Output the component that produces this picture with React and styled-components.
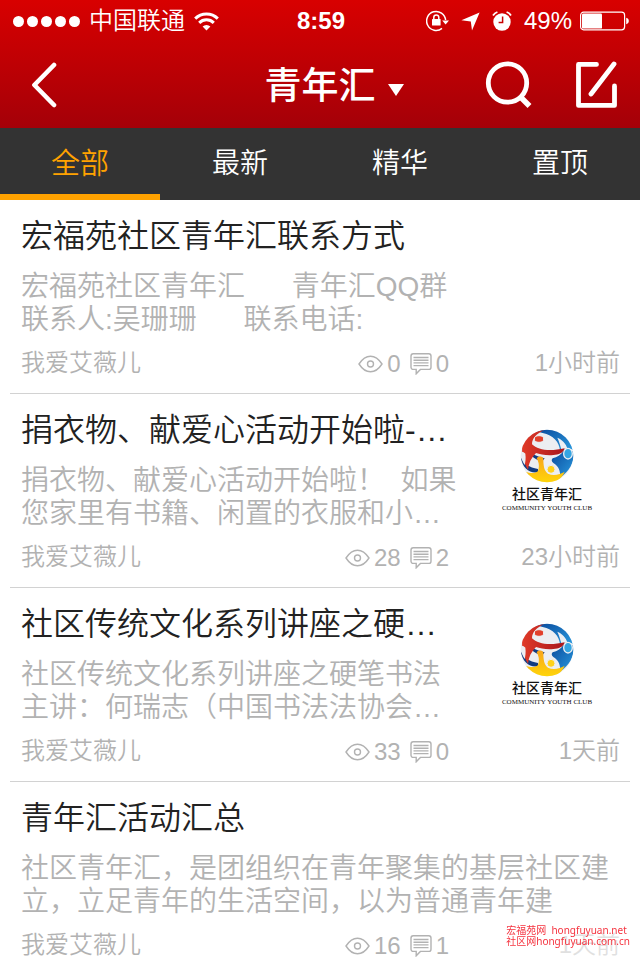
import { useState } from "react";
import styled, { createGlobalStyle } from "styled-components";

const GlobalStyle = createGlobalStyle`
  * {
    box-sizing: border-box;
  }

  body {
    margin: 0;
    background-color: #fff;
    font-family: "Liberation Sans", "Noto Sans CJK SC", sans-serif;
    font-weight: 350;
  }

  button {
    margin: 0;
    padding: 0;
    border: none;
    background: none;
    color: inherit;
    font: inherit;
    cursor: pointer;
  }

  svg {
    display: block;
    flex-shrink: 0;
  }
`;

const Screen = styled.div`
  height: 100vh;
  display: flex;
  flex-direction: column;
  overflow: hidden;
`;

const Header = styled.header`
  flex-shrink: 0;
  color: #fff;
  background: linear-gradient(#d80000, #a40008);
`;

const StatusBar = styled.div`
  display: grid;
  grid-template-columns: 1fr auto 1fr;
  align-items: center;
  height: 40px;
  padding: 1px 11px 0 13px;
  font-size: 24px;
  line-height: 40px;
`;

const StatusGroup = styled.div`
  display: flex;
  align-items: center;
  justify-content: ${(props) => (props.$end ? "flex-end" : "flex-start")};
  gap: ${(props) => (props.$end ? 12 : 9)}px;
`;

const Signal = styled.div`
  display: flex;
  gap: 3px;

  span {
    width: 11px;
    height: 11px;
    border-radius: 50%;
    background-color: #fff;
  }
`;

const Clock = styled.time`
  font-weight: 700;
`;

const Power = styled.div`
  display: flex;
  align-items: center;
  gap: 8px;
`;

const NavBar = styled.div`
  display: grid;
  grid-template-columns: 1fr auto 1fr;
  align-items: center;
  height: 88px;
  padding: 2px 22px 0 30px;
`;

const BackButton = styled.button`
  justify-self: start;
`;

const BoardButton = styled.button`
  display: flex;
  align-items: center;
  gap: 12px;
  padding: 4px 0 0 20px;

  h1 {
    margin: 0;
    font-size: 37px;
    font-weight: 500;
    line-height: 48px;
  }

  svg {
    margin-top: 6px;
  }
`;

const NavActions = styled.div`
  display: flex;
  align-items: center;
  justify-content: flex-end;
  gap: 41px;
`;

const Tabs = styled.nav`
  display: grid;
  grid-template-columns: repeat(4, 1fr);
  flex-shrink: 0;
  height: 72px;
  background-color: #333;
`;

const Tab = styled.button`
  border-bottom: 6px solid ${(props) => (props.$active ? "#ffa200" : "#333")};
  color: ${(props) => (props.$active ? "#ffa200" : "#fff")};
  font-size: ${(props) => (props.$active ? 29 : 28)}px;
`;

const Feed = styled.main`
  flex: 1;
  min-height: 0;
  padding: 0 10px;
  overflow-y: auto;
  scrollbar-width: none;
`;

const Post = styled.article`
  padding: 12px 10px 14px 11px;
  border-bottom: 1px solid #d2d2d2;
`;

const PostBody = styled.div`
  display: flex;
  justify-content: space-between;
`;

const PostText = styled.div`
  flex: 1;
  min-width: 0;
`;

const PostTitle = styled.h2`
  margin: 0 0 10px;
  color: #222;
  font-size: 32px;
  font-weight: 350;
  line-height: 48px;
  white-space: nowrap;
`;

const Summary = styled.p`
  margin: 0;
  color: #b2b2b2;
  font-size: 28px;
  line-height: 33px;
  white-space: pre;
`;

const Thumb = styled.figure`
  display: flex;
  flex-direction: column;
  align-items: center;
  width: 146px;
  margin: 0;
  padding-top: 23px;
  color: #111;
`;

const ThumbName = styled.figcaption`
  margin-top: 2px;
  font-size: 14px;
  font-weight: 500;
  line-height: 19px;
  text-align: center;
  white-space: nowrap;

  small {
    display: block;
    font-family: "Liberation Serif", serif;
    font-size: 7px;
    font-weight: 400;
    line-height: 8px;
  }
`;

const Meta = styled.footer`
  display: flex;
  align-items: center;
  height: 32px;
  margin-top: 11px;
  color: #b2b2b2;
  font-size: 24px;
  line-height: 32px;
`;

const Author = styled.span`
  flex: 1;
`;

const Stat = styled.span`
  display: flex;
  align-items: center;
  gap: 4px;
  margin-left: 9px;
  padding-top: 2px;
`;

const Age = styled.time`
  width: 171px;
  text-align: right;
`;

const Watermark = styled.aside`
  position: fixed;
  right: 8px;
  bottom: 0;
  padding: 0 2px 13px;
  background-color: rgba(255, 255, 255, 0.6);
  color: #f5333f;
  font-family: "Noto Sans", "Noto Sans CJK SC", sans-serif;
  font-size: 10px;
  font-weight: 400;
  line-height: 11px;
  white-space: pre;
`;

const posts = [
  {
    id: 1,
    title: "宏福苑社区青年汇联系方式",
    summary: "宏福苑社区青年汇      青年汇QQ群\n联系人:吴珊珊      联系电话:",
    views: 0,
    replies: 0,
    age: "1小时前",
  },
  {
    id: 2,
    title: "捐衣物、献爱心活动开始啦-…",
    summary: "捐衣物、献爱心活动开始啦！  如果\n您家里有书籍、闲置的衣服和小…",
    views: 28,
    replies: 2,
    age: "23小时前",
    thumb: true,
  },
  {
    id: 3,
    title: "社区传统文化系列讲座之硬…",
    summary: "社区传统文化系列讲座之硬笔书法\n主讲：何瑞志（中国书法法协会…",
    views: 33,
    replies: 0,
    age: "1天前",
    thumb: true,
  },
  {
    id: 4,
    title: "青年汇活动汇总",
    summary: "社区青年汇，是团组织在青年聚集的基层社区建\n立，立足青年的生活空间，以为普通青年建",
    views: 16,
    replies: 1,
    age: "1天前",
  },
];

const WifiIcon = () => (
  <svg width="25" height="19" viewBox="0 0 25 19" fill="none" stroke="#fff" strokeWidth="3">
    <path d="M1.2 6.6a16 16 0 0 1 22.6 0" />
    <path d="M5.2 10.9a10.3 10.3 0 0 1 14.6 0" />
    <path d="M12.5 18.6 8.6 14.6a5.6 5.6 0 0 1 7.8 0z" fill="#fff" stroke="none" />
  </svg>
);

const LockIcon = () => (
  <svg width="23" height="22" viewBox="0 0 23 22" fill="none" stroke="#fff" strokeWidth="1.5">
    <path d="M16 18.4A9.5 9.5 0 1 1 19.6 10" />
    <path d="M16.2 10.4h6.8l-3.4 4.2z" fill="#fff" stroke="none" />
    <rect x="6" y="9" width="8.6" height="6.6" rx="0.6" fill="#fff" stroke="none" />
    <path d="M7.8 9.4V7.4a2.5 2.5 0 0 1 5 0v2" />
  </svg>
);

const LocationIcon = () => (
  <svg width="19" height="19" viewBox="0 0 19 19" fill="#fff">
    <path d="M18.6.4 11 18.6 9.8 9.4.4 8.2z" />
  </svg>
);

const AlarmIcon = () => (
  <svg width="20" height="20" viewBox="0 0 20 20" fill="none" stroke="#fff">
    <circle cx="10" cy="11" r="8.7" fill="#fff" stroke="none" />
    <path d="M1 4.4A9 9 0 0 1 5.4 1M14.6 1A9 9 0 0 1 19 4.4" strokeWidth="1.8" />
    <path d="M10.6 5.6v6H6.6" stroke="#c90000" strokeWidth="1.5" />
  </svg>
);

const BatteryIcon = () => (
  <svg width="49" height="20" viewBox="0 0 49 20">
    <rect x="0.6" y="1.2" width="44" height="17.6" rx="3" fill="none" stroke="#fff" strokeWidth="1.2" />
    <rect x="2" y="2.6" width="20" height="15" rx="1.2" fill="#fff" />
    <path d="M46.2 6.8v6.4c1.6-.3 2.6-1.5 2.6-3.2s-1-2.9-2.6-3.2z" fill="#fff" />
  </svg>
);

const BackIcon = () => (
  <svg width="28" height="46" viewBox="0 0 28 46" fill="none" stroke="#fff" strokeWidth="4.6" strokeLinecap="round" strokeLinejoin="round">
    <path d="M24 3 4.4 23 24 43" />
  </svg>
);

const SearchIcon = () => (
  <svg width="48" height="48" viewBox="0 0 48 48" fill="none" stroke="#fff" strokeWidth="4.8" strokeLinecap="round">
    <circle cx="22.5" cy="22" r="19.2" />
    <path d="M36 36.5 44.5 45" strokeLinecap="butt" strokeWidth="5.5" />
  </svg>
);

const ComposeIcon = () => (
  <svg width="44" height="48" viewBox="0 0 44 48" fill="none" stroke="#fff" strokeWidth="4.8" strokeLinecap="round" strokeLinejoin="round">
    <path d="M22.5 3.4H4.5V44.4H40.5V25" />
    <path d="M40 3 17 33" />
  </svg>
);

const EyeIcon = () => (
  <svg width="25" height="18" viewBox="0 0 25 18" fill="none" stroke="#b2b2b2" strokeWidth="1.4">
    <path d="M1 9C4.5 3.6 8.5 1.2 12.5 1.2S20.5 3.6 24 9c-3.5 5.4-7.5 7.8-11.5 7.8S4.5 14.4 1 9z" />
    <circle cx="12.5" cy="9" r="3" />
  </svg>
);

const CommentIcon = () => (
  <svg width="22" height="22" viewBox="0 0 22 22" fill="none" stroke="#b2b2b2" strokeWidth="1.4">
    <path d="M3.2.8h15.6a2.2 2.2 0 0 1 2.2 2.2v11.2a2.2 2.2 0 0 1-2.2 2.2H10.4L6.2 20.8v-4.4h-3A2.2 2.2 0 0 1 1 14.2V3A2.2 2.2 0 0 1 3.2.8z" />
    <path d="M3.5 4.5h15M3.5 7.2h15M3.5 9.9h15M3.5 12.6h15" />
  </svg>
);

const ClubLogo = () => (
  <svg width="54" height="54" viewBox="0 0 162 162">
    <defs>
      <clipPath id="ball">
        <circle cx="81" cy="81" r="79" />
      </clipPath>
      <linearGradient id="sky" x1="0" y1="0" x2="1" y2="1">
        <stop offset="0" stopColor="#0a4a9c" />
        <stop offset="1" stopColor="#2a9be0" />
      </linearGradient>
      <linearGradient id="flame" x1="0" y1="0" x2="1" y2="0">
        <stop offset="0" stopColor="#e03a28" />
        <stop offset="1" stopColor="#a8161c" />
      </linearGradient>
      <linearGradient id="sun" x1="0" y1="0" x2="0" y2="1">
        <stop offset="0" stopColor="#f9a51a" />
        <stop offset="1" stopColor="#ffd60a" />
      </linearGradient>
    </defs>
    <g clipPath="url(#ball)">
      <rect width="162" height="162" fill="#eceef2" />
      <path d="M50 6C78-4 118 0 140 24c8 10 16 24 20 40-8-6-20-8-28-2-4 2-8 4-12 2-2-24-20-46-52-52-8-2-14-4-18-6z" fill="url(#sky)" />
      <path d="M112 26c14 6 26 18 30 32-8 2-12 6-16 10-4-14-8-30-14-42z" fill="#eceef2" />
      <path d="M98 88c14-4 24-10 32-22 8-6 22-4 32 4 0 32-14 58-42 76 2-20-4-34-20-44-6-4-6-10-2-14z" fill="url(#sky)" />
      <ellipse cx="144" cy="74" rx="13" ry="16" fill="#34a5e2" stroke="#eceef2" strokeWidth="4" />
      <path d="M2 84c8 20 26 32 52 36v10C28 134 8 118 2 84z" fill="#123c80" />
      <path d="M38 76c10 4 24 10 36 12l-8 10c-12-4-24-10-30-16z" fill="#123c80" />
      <path d="M8 40C20 18 42 6 72 4 50 14 36 28 36 46c18 18 54 22 98 12-4 14-18 20-34 20-20 2-40-2-52-6-14 14-22 30-24 50C12 104 2 72 8 40z" fill="url(#flame)" />
      <path d="M4 70c4-2 8 0 12 4 2 14 0 26-2 34C6 96 2 84 4 70z" fill="#eceef2" />
      <ellipse cx="57" cy="30" rx="14" ry="10" fill="#e2402c" stroke="#eceef2" strokeWidth="3" />
      <path d="M50 88c4-7 16-7 20 0 0 22 2 38 14 46 18 8 36 2 50-6-8 22-28 34-52 34-28 0-52-12-66-34 16 6 30 6 38-2 4-12 4-24-4-38z" fill="url(#sun)" />
      <ellipse cx="93" cy="121" rx="12" ry="12" fill="#ffd21a" stroke="#eceef2" strokeWidth="3" />
    </g>
  </svg>
);

const tabs = ["全部", "最新", "精华", "置顶"];

const App = () => {
  const [activeTab, setActiveTab] = useState("全部");

  return (
    <Screen>
      <GlobalStyle />
      <Header>
        <StatusBar>
          <StatusGroup>
            <Signal>
              <span />
              <span />
              <span />
              <span />
              <span />
            </Signal>
            <span>中国联通</span>
            <WifiIcon />
          </StatusGroup>
          <Clock>8:59</Clock>
          <StatusGroup $end>
            <LockIcon />
            <LocationIcon />
            <AlarmIcon />
            <Power>
              <span>49%</span>
              <BatteryIcon />
            </Power>
          </StatusGroup>
        </StatusBar>
        <NavBar>
          <BackButton aria-label="返回">
            <BackIcon />
          </BackButton>
          <BoardButton>
            <h1>青年汇</h1>
            <svg width="16" height="12" viewBox="0 0 16 12" fill="#fff">
              <path d="M0 0h16L8 12z" />
            </svg>
          </BoardButton>
          <NavActions>
            <button aria-label="搜索">
              <SearchIcon />
            </button>
            <button aria-label="发帖">
              <ComposeIcon />
            </button>
          </NavActions>
        </NavBar>
      </Header>

      <Tabs>
        {tabs.map((tab) => (
          <Tab key={tab} $active={tab === activeTab} onClick={() => setActiveTab(tab)}>
            {tab}
          </Tab>
        ))}
      </Tabs>

      <Feed>
        {posts.map((post) => (
          <Post key={post.id}>
            <PostBody>
              <PostText>
                <PostTitle>{post.title}</PostTitle>
                <Summary>{post.summary}</Summary>
              </PostText>
              {post.thumb && (
                <Thumb>
                  <ClubLogo />
                  <ThumbName>
                    社区青年汇
                    <small>COMMUNITY YOUTH CLUB</small>
                  </ThumbName>
                </Thumb>
              )}
            </PostBody>
            <Meta>
              <Author>我爱艾薇儿</Author>
              <Stat>
                <EyeIcon />
                {post.views}
              </Stat>
              <Stat>
                <CommentIcon />
                {post.replies}
              </Stat>
              <Age>{post.age}</Age>
            </Meta>
          </Post>
        ))}
      </Feed>

      <Watermark>{"宏福苑网  hongfuyuan.net\n社区网hongfuyuan.com.cn"}</Watermark>
    </Screen>
  );
};

export default App;
